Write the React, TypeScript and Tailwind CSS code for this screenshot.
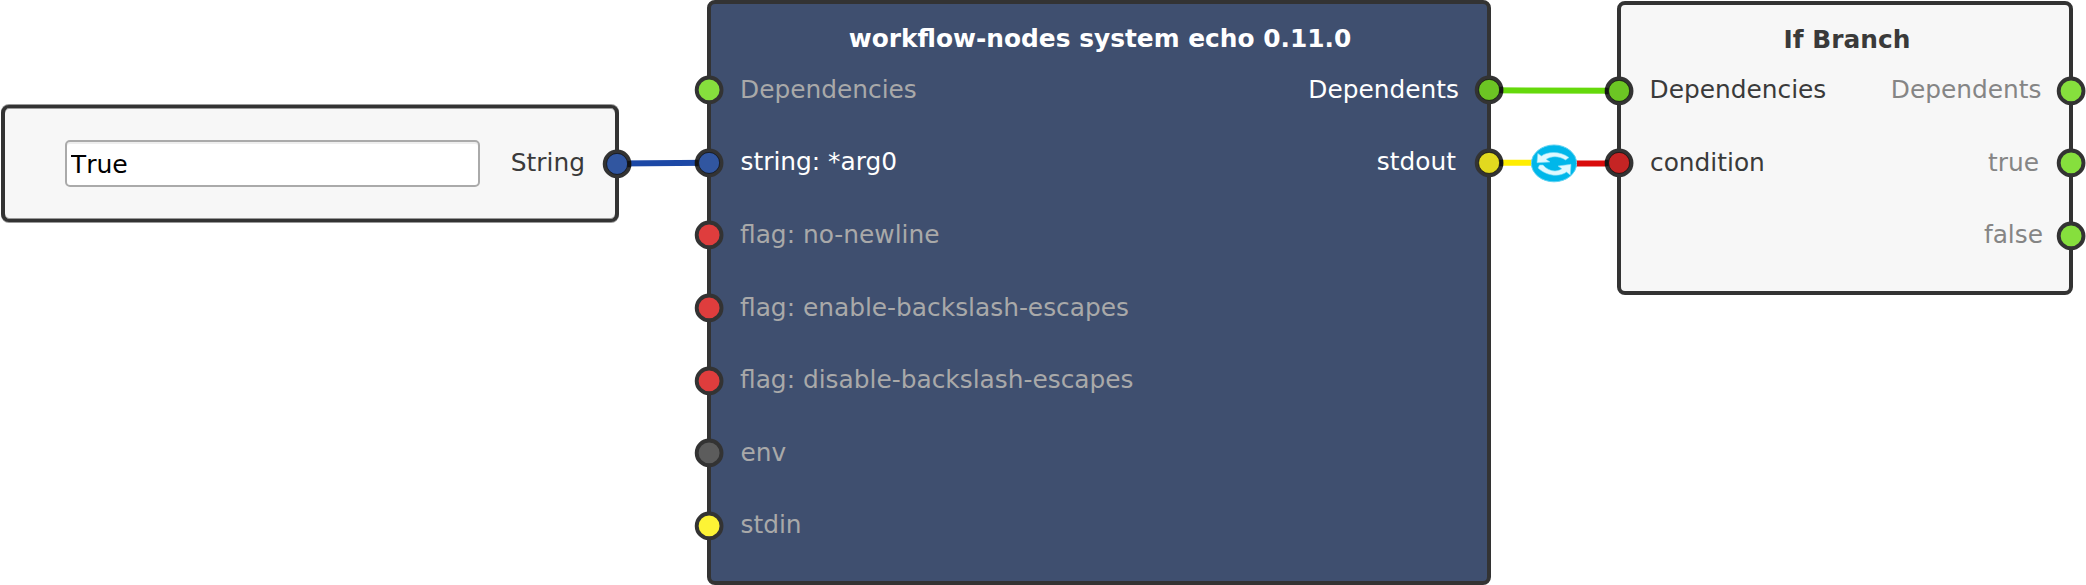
import React from "react";

type Side = "left" | "right";
type PortData = { label: string; fill: string; text: string; pad: string; linked?: boolean };

function Dot({ fill, linked, side }: { fill: string; linked?: boolean; side: Side }) {
  return (
    <svg viewBox="0 0 30 30" className="block size-[30px] shrink-0 overflow-visible">
      <circle cx="15.1" cy="14.9" r="12.4" fill={fill} stroke="#333" strokeWidth="3.9" />
      {linked && (
        <>
          <rect x={side === "right" ? 25.5 : 0.8} y="11.8" width="3.6" height="6.4" fill="#000" fillOpacity="0.6" />
          <circle cx="15.1" cy="14.9" r="10.5" fill="none" stroke="#000" strokeOpacity="0.6" strokeWidth="0.9" />
        </>
      )}
    </svg>
  );
}

function PortRow({ port, side }: { port: PortData; side: Side }) {
  return (
    <div className={`flex h-[72.6px] items-center ${side === "right" ? "flex-row-reverse" : ""}`}>
      <Dot fill={port.fill} linked={port.linked} side={side} />
      <span className={`scale-y-[1.03] whitespace-nowrap leading-none ${port.pad} ${port.text}`}>{port.label}</span>
    </div>
  );
}

function Node({ title, box, titleClass, left, right }: {
  title: string; box: string; titleClass: string; left: PortData[]; right: PortData[];
}) {
  return (
    <section className={`absolute flex flex-col rounded-[8px] border-4 border-[#333] ${box}`}>
      <h2 className={`flex shrink-0 scale-y-[1.03] items-center justify-center whitespace-nowrap font-bold leading-none ${titleClass}`}>{title}</h2>
      <div className="-mx-[17px] flex justify-between">
        <div>{left.map((p) => <PortRow key={p.label} port={p} side="left" />)}</div>
        <div>{right.map((p) => <PortRow key={p.label} port={p} side="right" />)}</div>
      </div>
    </section>
  );
}

const muted = "text-[#a9a9a9]";
const echoInputs: PortData[] = [
  { label: "Dependencies", fill: "#86df3d", text: muted, pad: "pl-[16px]" },
  { label: "string: *arg0", fill: "#3156a0", text: "text-white", pad: "pl-[16.5px]", linked: true },
  { label: "flag: no-newline", fill: "#df3d3d", text: muted, pad: "pl-[16px]" },
  { label: "flag: enable-backslash-escapes", fill: "#df3d3d", text: muted, pad: "pl-[16px]" },
  { label: "flag: disable-backslash-escapes", fill: "#df3d3d", text: muted, pad: "pl-[16px]" },
  { label: "env", fill: "#5c5c5c", text: muted, pad: "pl-[16.5px]" },
  { label: "stdin", fill: "#fdf335", text: muted, pad: "pl-[16.5px]" },
];
const echoOutputs: PortData[] = [
  { label: "Dependents", fill: "#6cc524", text: "text-white", pad: "pr-[15px]", linked: true },
  { label: "stdout", fill: "#e2d91f", text: "text-white", pad: "pr-[18px]", linked: true },
];
const branchInputs: PortData[] = [
  { label: "Dependencies", fill: "#6cc524", text: "text-[#3a3a3a]", pad: "pl-[15.5px]", linked: true },
  { label: "condition", fill: "#c52424", text: "text-[#3a3a3a]", pad: "pl-[16px]", linked: true },
];
const branchOutputs: PortData[] = [
  { label: "Dependents", fill: "#86df3d", text: "text-[#858585]", pad: "pr-[14.5px]" },
  { label: "true", fill: "#86df3d", text: "text-[#858585]", pad: "pr-[17px]" },
  { label: "false", fill: "#86df3d", text: "text-[#858585]", pad: "pr-[13px]" },
];

export default function App() {
  return (
    <main className="relative h-[585px] w-[2086px] overflow-hidden bg-white font-['DejaVu_Sans',sans-serif] text-[24.85px]">
      <svg viewBox="0 0 2086 585" className="absolute inset-0 h-[585px] w-[2086px]" strokeWidth="6">
        <path d="M616.5 163.4L709.3 162.7" stroke="#1c48a6" />
        <path d="M1489 90.3L1618.8 90.7" stroke="#65d90b" />
        <path d="M1489 162.7H1554" stroke="#ffed00" />
        <path d="M1554 163.4H1618.8" stroke="#d90b0b" />
      </svg>

      <section className="absolute left-[1px] top-[105px] flex h-[117px] w-[617.5px] items-center rounded-[8px] border-x-4 border-y-[3px] border-[#333] bg-[#f7f7f7] shadow-[0_1px_0_#999,0_-1px_0_#999,inset_0_1px_0_#999,inset_0_-1px_0_#999]">
        <input
          defaultValue="True"
          className="ml-[60.3px] h-[47px] w-[414.5px] rounded-[5px] border-2 border-[#aaa] bg-white px-[3.5px] pt-[2px] text-[25.1px] text-black shadow-[inset_0_2px_0_#eee] outline-none [font-kerning:none]"
        />
        <div className="-mr-[17px] ml-auto flex items-center">
          <span className="scale-y-[1.03] pb-[1px] pr-[16.5px] leading-none text-[#3a3a3a]">String</span>
          <Dot fill="#3156a0" linked side="right" />
        </div>
      </section>

      <Node title="workflow-nodes system echo 0.11.0" box="left-[707px] top-0 h-[585px] w-[784px] bg-[#3f4f6f]" titleClass="h-[50px] pl-[2px] pt-[19px] text-white" left={echoInputs} right={echoOutputs} />
      <Node title="If Branch" box="left-[1617px] top-[1px] h-[294px] w-[456px] bg-[#f7f7f7]" titleClass="h-[49.3px] pl-[4px] pt-[19px] text-[#3a3a3a]" left={branchInputs} right={branchOutputs} />

      <svg viewBox="0 0 46 39" className="absolute left-[1531px] top-[144px] h-[39px] w-[46px]">
        <ellipse cx="23" cy="19.4" rx="22.6" ry="18.4" fill="#00b7ea" stroke="#5fd2f2" strokeWidth="1" />
        <g fill="#dff9ff" stroke="#7fdcf5" strokeWidth="0.6">
          <path d="M6 18.7L6.8 9.5L10.5 12C16 7.6 29 6.6 38 13.6L34.5 16C28 11.8 20.5 11.8 15.2 15.2L19 18Z" />
          <path d="M40 20.3L39.2 31L35.5 28C30 32.4 17 33.4 7 24L8.5 21H12C18 28 26 28.2 30.8 24.8L27 22Z" />
        </g>
      </svg>
    </main>
  );
}
